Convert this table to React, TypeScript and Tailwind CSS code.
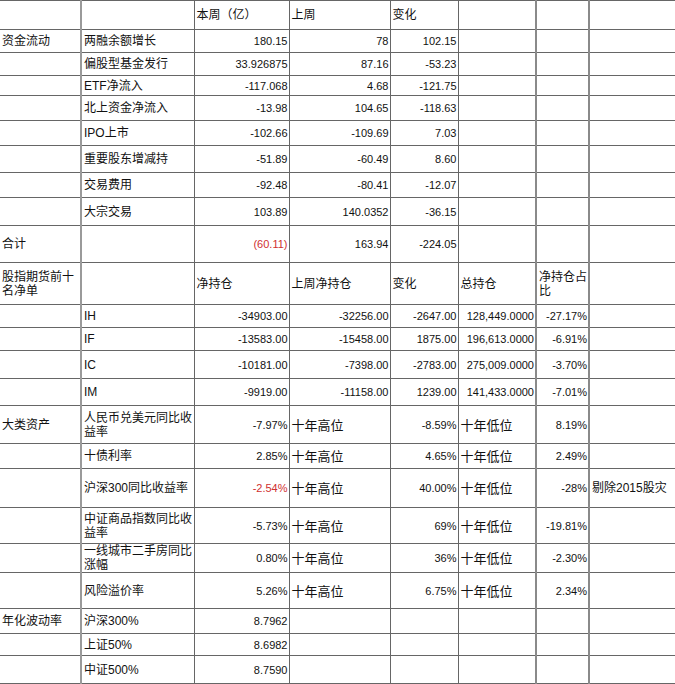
import React from 'react'

type Cell = { t?: string; n?: boolean; red?: boolean; big?: boolean }

const colWidths = [
  'w-[81px]',
  'w-[113px]',
  'w-[95px]',
  'w-[101px]',
  'w-[68px]',
  'w-[78px]',
  'w-[53px]',
  'w-[86px]',
]

const txt = (t: string): Cell => ({ t })
const num = (t: string, red = false): Cell => ({ t, n: true, red })
const pos = (t: string): Cell => ({ t, big: true })
const E: Cell = {}

const rows: { h: string; cells: Cell[] }[] = [
  { h: 'h-[29px]', cells: [E, E, txt('本周（亿）'), txt('上周'), txt('变化'), E, E, E] },
  { h: 'h-[23px]', cells: [txt('资金流动'), txt('两融余额增长'), num('180.15'), num('78'), num('102.15'), E, E, E] },
  { h: 'h-[23px]', cells: [E, txt('偏股型基金发行'), num('33.926875'), num('87.16'), num('-53.23'), E, E, E] },
  { h: 'h-[20px]', cells: [E, txt('ETF净流入'), num('-117.068'), num('4.68'), num('-121.75'), E, E, E] },
  { h: 'h-[25px]', cells: [E, txt('北上资金净流入'), num('-13.98'), num('104.65'), num('-118.63'), E, E, E] },
  { h: 'h-[25px]', cells: [E, txt('IPO上市'), num('-102.66'), num('-109.69'), num('7.03'), E, E, E] },
  { h: 'h-[27px]', cells: [E, txt('重要股东增减持'), num('-51.89'), num('-60.49'), num('8.60'), E, E, E] },
  { h: 'h-[25px]', cells: [E, txt('交易费用'), num('-92.48'), num('-80.41'), num('-12.07'), E, E, E] },
  { h: 'h-[28px]', cells: [E, txt('大宗交易'), num('103.89'), num('140.0352'), num('-36.15'), E, E, E] },
  { h: 'h-[37px]', cells: [txt('合计'), E, num('(60.11)', true), num('163.94'), num('-224.05'), E, E, E] },
  { h: 'h-[42px]', cells: [txt('股指期货前十名净单'), E, txt('净持仓'), txt('上周净持仓'), txt('变化'), txt('总持仓'), txt('净持仓占比'), E] },
  { h: 'h-[23px]', cells: [E, txt('IH'), num('-34903.00'), num('-32256.00'), num('-2647.00'), num('128,449.0000'), num('-27.17%'), E] },
  { h: 'h-[23px]', cells: [E, txt('IF'), num('-13583.00'), num('-15458.00'), num('1875.00'), num('196,613.0000'), num('-6.91%'), E] },
  { h: 'h-[28px]', cells: [E, txt('IC'), num('-10181.00'), num('-7398.00'), num('-2783.00'), num('275,009.0000'), num('-3.70%'), E] },
  { h: 'h-[27px]', cells: [E, txt('IM'), num('-9919.00'), num('-11158.00'), num('1239.00'), num('141,433.0000'), num('-7.01%'), E] },
  { h: 'h-[38px]', cells: [txt('大类资产'), txt('人民币兑美元同比收益率'), num('-7.97%'), pos('十年高位'), num('-8.59%'), pos('十年低位'), num('8.19%'), E] },
  { h: 'h-[25px]', cells: [E, txt('十债利率'), num('2.85%'), pos('十年高位'), num('4.65%'), pos('十年低位'), num('2.49%'), E] },
  { h: 'h-[39px]', cells: [E, txt('沪深300同比收益率'), num('-2.54%', true), pos('十年高位'), num('40.00%'), pos('十年低位'), num('-28%'), txt('剔除2015股灾')] },
  { h: 'h-[36px]', cells: [E, txt('中证商品指数同比收益率'), num('-5.73%'), pos('十年高位'), num('69%'), pos('十年低位'), num('-19.81%'), E] },
  { h: 'h-[29px]', cells: [E, txt('一线城市二手房同比涨幅'), num('0.80%'), pos('十年高位'), num('36%'), pos('十年低位'), num('-2.30%'), E] },
  { h: 'h-[36px]', cells: [E, txt('风险溢价率'), num('5.26%'), pos('十年高位'), num('6.75%'), pos('十年低位'), num('2.34%'), E] },
  { h: 'h-[25px]', cells: [txt('年化波动率'), txt('沪深300%'), num('8.7962'), E, E, E, E, E] },
  { h: 'h-[22px]', cells: [E, txt('上证50%'), num('8.6982'), E, E, E, E, E] },
  { h: 'h-[28px]', cells: [E, txt('中证500%'), num('8.7590'), E, E, E, E, E] },
]

// column edges: gray lines at 81, 536, 589; dark lines elsewhere
const colBorder = [
  'border-l-0',
  'border-l-2 border-l-[#9a9a9a]',
  'border-l-[#333]',
  'border-l-[#333]',
  'border-l-[#333]',
  'border-l-[#333]',
  'border-l-2 border-l-[#8a8a8a]',
  'border-l-2 border-l-[#8a8a8a]',
]

function cellClass(c: Cell, ci: number) {
  const font = c.n
    ? "text-right text-[11px] font-['Liberation_Sans','Noto_Sans_CJK_SC',sans-serif]"
    : c.big
      ? "text-left text-[13px] font-['Noto_Sans_CJK_SC',sans-serif]"
      : "text-left text-[12px] font-['Liberation_Sans','Noto_Sans_CJK_SC',sans-serif]"
  return [
    'border border-[#666] align-middle p-0 pl-[2px] pr-[1px] leading-[14px] break-all',
    colBorder[ci],
    font,
    c.red ? 'text-[#d03030]' : '',
    ci === 7 ? 'whitespace-nowrap' : '',
  ].join(' ')
}

export default function App() {
  return (
    <div className="w-[675px] h-[684px] bg-white overflow-hidden">
      <table className="w-[675px] table-fixed border-collapse text-[#111]">
        <colgroup>
          {colWidths.map((w, i) => (
            <col key={i} className={w} />
          ))}
        </colgroup>
        <tbody>
          {rows.map((row, ri) => (
            <tr key={ri} className={row.h}>
              {row.cells.map((c, ci) => (
                <td key={ci} className={cellClass(c, ci)}>
                  {c.t ?? ''}
                </td>
              ))}
            </tr>
          ))}
        </tbody>
      </table>
    </div>
  )
}
